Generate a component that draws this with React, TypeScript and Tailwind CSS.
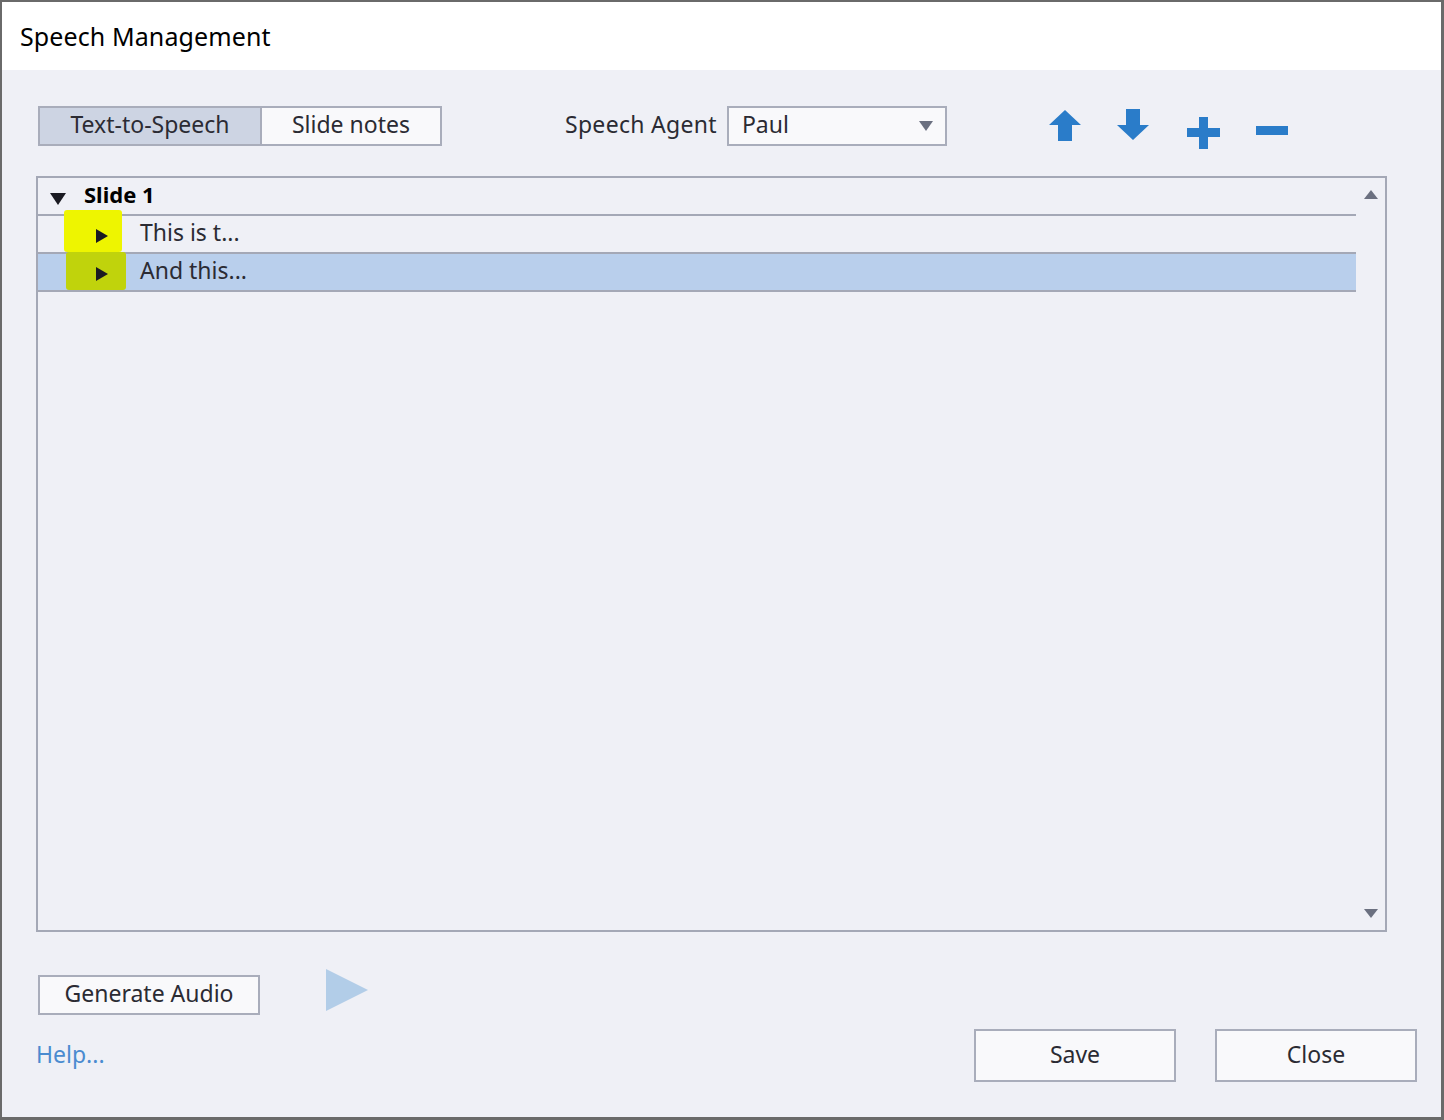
import { useState } from 'react';

const font = { fontFamily: '"Noto Sans", "Open Sans", sans-serif' };

function ArrowUp() {
  return (
    <svg width="34" height="34" viewBox="0 0 34 34">
      <path d="M17 2 L33 17 L24 17 L24 33 L10 33 L10 17 L1 17 Z" fill="#2a7cc9" />
    </svg>
  );
}

function ArrowDown() {
  return (
    <svg width="34" height="34" viewBox="0 0 34 34">
      <path d="M17 32 L33 17 L24 17 L24 1 L10 1 L10 17 L1 17 Z" fill="#2a7cc9" />
    </svg>
  );
}

function Plus() {
  return (
    <svg width="34" height="34" viewBox="0 0 34 34" className="mt-[8px]">
      <path d="M12 1 H21 V12 H33 V21 H21 V33 H12 V21 H0 V12 H12 Z" fill="#2a7cc9" />
    </svg>
  );
}

function Minus() {
  return (
    <svg width="34" height="34" viewBox="0 0 34 34" className="mt-[8px]">
      <rect x="1" y="10" width="32" height="9" fill="#2a7cc9" />
    </svg>
  );
}

type Row = { text: string; highlight: string; selected: boolean };

const rows: Row[] = [
  { text: 'This is t...', highlight: 'bg-[#eef500]', selected: false },
  { text: 'And this...', highlight: 'bg-[#c0d30c]', selected: true },
];

export default function App() {
  const [tab, setTab] = useState<'tts' | 'notes'>('tts');

  return (
    <div
      className="w-[1444px] h-[1120px] bg-[#eff0f6] border-l-2 border-t-2 border-r-[3px] border-b-[3px] border-[#6a6a6a] flex flex-col text-[#2b2b33]"
      style={font}
    >
      {/* Title bar */}
      <div className="h-[68px] bg-white flex items-center pl-[18px] shrink-0">
        <span className="text-[25px] text-black leading-none tracking-[0.1px]">Speech Management</span>
      </div>

      {/* Toolbar */}
      <div className="flex items-center mt-[36px] pl-[36px] h-[40px]">
        <div className="flex h-[40px] border-2 border-[#a9adbb]">
          <button
            onClick={() => setTab('tts')}
            className={`w-[222px] h-full text-[23px] border-r-2 border-[#a9adbb] leading-none pb-[4px] ${
              tab === 'tts' ? 'bg-[#cdd4e3]' : 'bg-[#f9f9fb]'
            }`}
          >
            Text-to-Speech
          </button>
          <button
            onClick={() => setTab('notes')}
            className={`w-[178px] h-full text-[23px] leading-none pb-[4px] ${
              tab === 'notes' ? 'bg-[#cdd4e3]' : 'bg-[#f9f9fb]'
            }`}
          >
            Slide notes
          </button>
        </div>

        <span className="ml-[123px] text-[23px] leading-none mb-[4px] tracking-[0.3px]">Speech Agent</span>
        <div className="ml-[10px] w-[220px] h-[40px] border-2 border-[#a9adbb] bg-[#f9f9fb] flex items-center justify-between pl-[13px] pr-[12px]">
          <span className="text-[23px] leading-none mb-[4px]">Paul</span>
          <svg width="14" height="10" viewBox="0 0 14 10">
            <path d="M0 0 H14 L7 10 Z" fill="#6b7080" />
          </svg>
        </div>

        <div className="flex items-start ml-[101px] mt-[6px]">
          <ArrowUp />
          <div className="ml-[34px]">
            <ArrowDown />
          </div>
          <div className="ml-[37px]">
            <Plus />
          </div>
          <div className="ml-[34px]">
            <Minus />
          </div>
        </div>
      </div>

      {/* Tree */}
      <div className="ml-[34px] mt-[30px] w-[1351px] h-[756px] border-2 border-[#a4a8b6] flex">
        <div className="flex-1 flex flex-col">
          <div className="h-[38px] flex items-center border-b-2 border-[#a4a8b6]">
            <svg width="16" height="12" viewBox="0 0 16 12" className="ml-[12px] mt-[6px]">
              <path d="M0 0 H16 L8 12 Z" fill="#1a1a22" />
            </svg>
            <span className="ml-[18px] text-[22px] font-bold leading-none text-black mb-[4px]">Slide 1</span>
          </div>
          {rows.map((r) => (
            <div
              key={r.text}
              className={`relative h-[38px] flex items-center border-b-2 border-[#a4a8b6] ${
                r.selected ? 'bg-[#b9cfec]' : ''
              }`}
            >
              <div
                className={`absolute ${r.highlight} ${
                  r.selected ? 'left-[28px] top-[-2px] w-[60px] h-[38px]' : 'left-[26px] top-[-6px] w-[58px] h-[42px]'
                } rounded-[3px]`}
              />
              <svg width="12" height="14" viewBox="0 0 12 14" className="relative ml-[58px] mt-[4px]">
                <path d="M0 0 L12 7 L0 14 Z" fill="#1a1a22" />
              </svg>
              <span className="relative ml-[32px] text-[23px] leading-none mb-[4px]">{r.text}</span>
            </div>
          ))}
        </div>
        <div className="w-[29px] flex flex-col items-center justify-between py-[12px]">
          <svg width="14" height="9" viewBox="0 0 14 9">
            <path d="M7 0 L14 9 H0 Z" fill="#6b7080" />
          </svg>
          <svg width="14" height="9" viewBox="0 0 14 9">
            <path d="M0 0 H14 L7 9 Z" fill="#6b7080" />
          </svg>
        </div>
      </div>

      {/* Bottom */}
      <div className="flex justify-between pl-[34px] pr-[24px] mt-[43px]">
        <div className="flex flex-col">
          <div className="flex items-center">
            <button className="ml-[2px] w-[222px] h-[40px] border-2 border-[#a9adbb] bg-[#f9f9fb] text-[23px] leading-none pb-[4px]">
              Generate Audio
            </button>
            <svg width="42" height="42" viewBox="0 0 42 42" className="ml-[66px] -mt-[10px]">
              <path d="M0 0 L42 21 L0 42 Z" fill="#b2cde8" />
            </svg>
          </div>
          <a className="mt-[28px] text-[23px] leading-none text-[#4a8bd0] cursor-pointer">Help...</a>
        </div>
        <div className="flex gap-[39px] mt-[54px]">
          <button className="w-[202px] h-[53px] border-2 border-[#a9adbb] bg-[#f9f9fb] text-[23px] leading-none pb-[2px]">
            Save
          </button>
          <button className="w-[202px] h-[53px] border-2 border-[#a9adbb] bg-[#f9f9fb] text-[23px] leading-none pb-[2px]">
            Close
          </button>
        </div>
      </div>
    </div>
  );
}
